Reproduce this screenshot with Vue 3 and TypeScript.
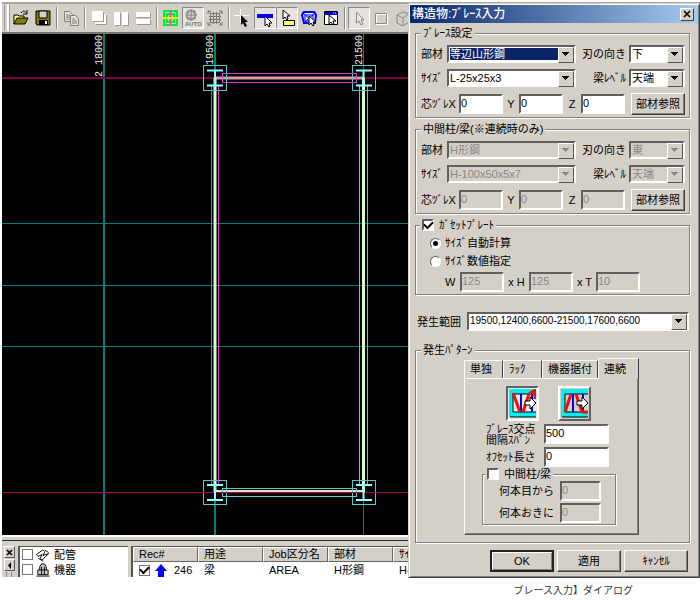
<script setup lang="ts">
import { reactive, ref } from 'vue'

interface Member {
  title: string
  disabled: boolean
  part: string
  edge: string
  size: string
  level: string
  x: string
  y: string
  z: string
}

const members = reactive<Member[]>([
  { title: 'ﾌﾞﾚｰｽ設定', disabled: false, part: '等辺山形鋼', edge: '下', size: 'L-25x25x3', level: '天端', x: '0', y: '0', z: '0' },
  { title: '中間柱/梁(※連続時のみ)', disabled: true, part: 'H形鋼', edge: '東', size: 'H-100x50x5x7', level: '天端', x: '0', y: '0', z: '0' },
])

const gusset = ref(true)
const sizeMode = ref('auto')
const plate = reactive({ w: '125', h: '125', t: '10' })
const range = ref('19500,12400,6600-21500,17600,6600')
const tabs = ['単独', 'ﾗｯｸ', '機器据付', '連続']
const tab = ref('連続')
const pattern = ref(0)
const span = ref('500')
const offset = ref('0')
const middle = ref(false)
const from = ref('0')
const every = ref('0')
const tree = reactive([
  { name: '配管', on: false },
  { name: '機器', on: false },
])
const recOn = ref(true)
</script>

<template>
  <main class="page">
    <div class="app">
      <header class="toolbar">
        <span class="grip"></span>
        <button type="button" class="tool" aria-label="開く">
          <svg width="18" height="18" viewBox="0 0 18 18"><path d="M2 15V6h4l1 1h5v3" fill="#ffff80" stroke="#000" /><path d="M2 15l3-6h11l-3 6z" fill="#808000" stroke="#000" /><path d="M9 4c2-3 4-2 5 0M15 1v4h-4" fill="none" stroke="#000" /></svg>
        </button>
        <button type="button" class="tool" aria-label="保存">
          <svg width="18" height="18" viewBox="0 0 18 18"><path d="M2 2h14v14H3l-1-1z" fill="#808000" stroke="#000" /><path d="M5 2h8v7H5z" fill="#d4d0c8" stroke="#000" /><path d="M5 11h9v5H5z" fill="#000" /><path d="M11 12h2v3h-2z" fill="#fff" /></svg>
        </button>
        <span class="sep"></span>
        <button type="button" class="tool" aria-label="コピー">
          <svg width="18" height="18" viewBox="0 0 18 18" fill="#e4e1da" stroke="#808080"><path d="M2.500 2.500h5l3 3v7h-8z" /><path d="M8.500 6.500h5l3 3v7h-8z" /><path d="M4 6h4M4 8h4M4 10h4M10 10h3M10 12h5M10 14h5" /></svg>
        </button>
        <span class="sep"></span>
        <button type="button" class="tool" aria-label="重ねて表示">
          <svg width="18" height="18" viewBox="0 0 18 18"><path d="M6 6h11v10H6z" fill="#999" /><path d="M5 5h11v10H5z" fill="#fff" /><path d="M3 3h11v10H3z" fill="#999" /><path d="M2 2h11v10H2z" fill="#fff" /></svg>
        </button>
        <button type="button" class="tool" aria-label="左右に並べる">
          <svg width="18" height="18" viewBox="0 0 18 18"><path d="M3 4h6v13H3zM11 4h6v13h-6z" fill="#999" /><path d="M2 3h6v13H2zM10 3h6v13h-6z" fill="#fff" /></svg>
        </button>
        <button type="button" class="tool" aria-label="上下に並べる">
          <svg width="18" height="18" viewBox="0 0 18 18"><path d="M3 4h14v5H3zM3 11h14v5H3z" fill="#999" /><path d="M2 3h14v5H2zM2 10h14v5H2z" fill="#fff" /></svg>
        </button>
        <span class="sep"></span>
        <button type="button" class="tool" aria-label="グリッド">
          <svg width="18" height="18" viewBox="0 0 18 18"><path d="M1 1h15v16H1z" fill="#00f030" /><path d="M3.500 3.500h10v11h-10zM6.500 6.500h4v5h-4z" fill="none" stroke="#a0ffb0" /><path d="M8.500 1v16" stroke="#ff40c0" stroke-width="2" /><path d="M1 9h15" stroke="#f0f000" stroke-width="2" /></svg>
        </button>
        <button type="button" class="tool on" aria-label="自動">
          <svg width="20" height="20" viewBox="0 0 20 20"><circle cx="8" cy="7" r="5" fill="none" stroke="#808080" /><path d="M3 7h11M8 1v12M5 2v10M11 2v10M4 4h9M4 10h9" stroke="#808080" fill="none" /><text x="2" y="18" class="auto">AUTO</text></svg>
        </button>
        <button type="button" class="tool" aria-label="範囲">
          <svg width="18" height="18" viewBox="0 0 18 18" fill="none" stroke="#777"><path d="M4.500 4.500h9v9h-9zM7.500 3v12M10.500 3v12M3 7.500h12M3 10.500h12M2 5V2h3M13 2h3v3M16 13v3h-3M5 16H2v-3M2 2l3 3M16 2l-3 3M16 16l-3-3M2 16l3-3" /></svg>
        </button>
        <span class="sep"></span>
        <button type="button" class="tool" aria-label="点選択">
          <svg width="18" height="18" viewBox="0 0 18 18"><path d="M6.500 0v14M0 6.500h15" stroke="#fff" /><path d="M7 6v10l2-2 2 4 2-1-2-4h3z" /></svg>
        </button>
        <button type="button" class="tool on" aria-label="線選択">
          <svg width="18" height="18" viewBox="0 0 18 18"><path d="M1 5h16v4H1z" fill="#00f" /><path d="M9 7v10l2-2 2 3 1-1-1-3h3z" fill="#fff" stroke="#000" /></svg>
        </button>
        <button type="button" class="tool on" aria-label="面選択">
          <svg width="18" height="18" viewBox="0 0 18 18"><path d="M5.500 11.500h11v5h-11z" fill="#ff6" stroke="#000" /><path d="M5 1v9l2-2 2 3 1-1-1-3h3z" fill="#fff" stroke="#000" /></svg>
        </button>
        <button type="button" class="tool" aria-label="立体選択">
          <svg width="18" height="18" viewBox="0 0 18 18"><path d="M4 3h10l2 3-1 8H4L2 6z" fill="#e8e8ff" stroke="#00f" stroke-width="2" /><path d="M5 6h8v6H5zM2 3l12 11M16 3L4 14" fill="none" stroke="#00f" /><path d="M9 7v9l2-2 2 3 1-1-1-3h3z" fill="#fff" stroke="#000" /></svg>
        </button>
        <button type="button" class="tool" aria-label="ウィンドウ選択">
          <svg width="18" height="18" viewBox="0 0 18 18"><path d="M2.500 2.500h13v13h-13z" fill="#fff" stroke="#000" /><path d="M3 3h12v3H3z" fill="#00c" /><path d="M11 4h1M13 4h1" stroke="#fff" /><path d="M7 6v9l2-2 2 3 1-1-1-3h3z" fill="#fff" stroke="#000" /></svg>
        </button>
        <span class="sep"></span>
        <button type="button" class="tool on" aria-label="選択">
          <svg width="18" height="18" viewBox="0 0 18 18"><path d="M6.500 3v11l2.500-2 2 4 2-1-2-4h3z" fill="#e8e6e2" stroke="#888" /></svg>
        </button>
        <button type="button" class="tool" aria-label="矩形">
          <svg width="18" height="18" viewBox="0 0 18 18" fill="none"><path d="M4.500 5.500h11v10h-11z" stroke="#fff" /><path d="M3.500 4.500h11v10h-11z" stroke="#888" /></svg>
        </button>
        <button type="button" class="tool" aria-label="箱">
          <svg width="18" height="18" viewBox="0 0 18 18" fill="none" stroke="#888"><path d="M3 6l6-3 6 2v8l-6 4-6-3zM3 6l6 3 6-4M9 9v8" /></svg>
        </button>
      </header>

      <svg class="canvas" role="img" aria-label="平面図">
        <g transform="translate(-2 -34)" fill="none">
          <g stroke="#008080">
            <path d="M104 34V535" stroke-width="2" />
            <path d="M215 34V535" stroke-width="2" />
            <path d="M363.500 34V535M2 223.500H700M2 285.500H700M2 346.500H700" />
          </g>
          <g class="coord" fill="#f0f0f0">
            <text transform="translate(102 77) rotate(-90)">2 18000</text>
            <text transform="translate(213 65) rotate(-90)">19500</text>
            <text transform="translate(362 65) rotate(-90)">21500</text>
          </g>
          <path d="M2 78H700" stroke="#800048" stroke-width="2" />
          <path d="M215 78H363" stroke="#d89aa0" stroke-width="3" />
          <path d="M215 78V492M363.500 78V492" stroke="#d8ffd0" stroke-width="3" />
          <path d="M215 491H363" stroke="#e8e0b8" stroke-width="2" />
          <g stroke="#5cc8c8">
            <rect x="203.500" y="65.500" width="23" height="25" />
            <rect x="352.500" y="65.500" width="23" height="25" />
            <rect x="203.500" y="480.500" width="23" height="24" />
            <rect x="352.500" y="480.500" width="23" height="24" />
            <rect x="222.500" y="488.500" width="134" height="8" />
            <rect x="359.500" y="85.500" width="8" height="399" />
          </g>
          <g stroke="#d040d0">
            <rect x="222.500" y="73.500" width="134" height="9" />
            <rect x="211.500" y="85.500" width="7" height="399" />
          </g>
          <path d="M2 492.500H700" stroke="#b00060" />
          <g stroke="#90ffff" stroke-width="2">
            <path d="M207 70.500H223M207 85.500H223M215 71V85" />
            <path d="M356 70.500H372M356 85.500H372M363.500 71V85" />
            <path d="M207 485H223M207 500H223M215 485V500" />
            <path d="M356 485H372M356 500H372M363.500 485V500" />
          </g>
        </g>
      </svg>

      <section class="pane">
        <div class="side">
          <button type="button" class="mini" aria-label="閉じる"><svg width="7" height="7" viewBox="0 0 7 7"><path d="M1 1l5 5M6 1L1 6" stroke="#000" stroke-width="1.500" /></svg></button>
          <button type="button" class="mini" aria-label="たたむ"><svg width="7" height="7" viewBox="0 0 7 7"><path d="M5 0v7L2 3.500z" /></svg></button>
          <span class="dots"></span>
        </div>
        <ul class="tree">
          <li v-for="(n, i) in tree" :key="n.name">
            <label>
              <input v-model="n.on" type="checkbox" class="box grey">
              <svg v-if="i === 0" width="17" height="15" viewBox="0 0 17 16" fill="#fff" stroke="#000"><path d="M2 8l7-5 2 2-2 4 6-2-7 7-2-2 2-4-4 2z" /><path d="M11 3l4 3M4 12l5 3" /></svg>
              <svg v-else width="17" height="15" viewBox="0 0 17 16" fill="#ccc" stroke="#000"><path d="M5.500 13V5l2-3h3l2 3v8z" /><path d="M7.500 5v8M10.500 5v8M3.500 8.500h11v5h-11zM2 15h14" /></svg>
              <span>{{ n.name }}</span>
            </label>
          </li>
        </ul>
        <div class="records">
          <table>
            <colgroup><col class="c"><col class="c"><col class="c"><col class="c"><col></colgroup>
            <thead>
              <tr><th>Rec#</th><th>用途</th><th>Job区分名</th><th>部材</th><th>ｻｲｽﾞ</th></tr>
            </thead>
            <tbody>
              <tr>
                <td>
                  <label class="rec">
                    <input v-model="recOn" type="checkbox" class="box grey">
                    <svg width="14" height="13" viewBox="0 0 14 13"><path d="M7 0l6 7h-3v6H4V7H1z" fill="#00f" /></svg>
                    <span>246</span>
                  </label>
                </td>
                <td>梁</td><td>AREA</td><td>H形鋼</td><td>H-200x100</td>
              </tr>
            </tbody>
          </table>
        </div>
      </section>

      <form class="dialog" role="dialog" aria-labelledby="title" @submit.prevent>
        <div class="titlebar">
          <h1 id="title">構造物:ﾌﾞﾚｰｽ入力</h1>
          <button type="button" class="close" aria-label="閉じる"><svg width="8" height="8" viewBox="0 0 8 8"><path d="M1 1l6 6M7 1L1 7" stroke="#000" stroke-width="1.500" /></svg></button>
        </div>

        <div class="body">
          <fieldset v-for="(m, i) in members" :key="m.title" class="group member">
            <legend>{{ m.title }}</legend>
            <div class="pair">
              <label :for="'part' + i">部材</label>
              <span class="combo" :class="{ off: m.disabled, lit: i === 0 }">
                <select :id="'part' + i" v-model="m.part" :disabled="m.disabled"><option>{{ m.part }}</option></select>
              </span>
              <label class="right" :for="'edge' + i">刃の向き</label>
              <span class="combo" :class="{ off: m.disabled }">
                <select :id="'edge' + i" v-model="m.edge" :disabled="m.disabled"><option>{{ m.edge }}</option></select>
              </span>
            </div>
            <div class="pair">
              <label :for="'size' + i">ｻｲｽﾞ</label>
              <span class="combo" :class="{ off: m.disabled }">
                <select :id="'size' + i" v-model="m.size" :disabled="m.disabled"><option>{{ m.size }}</option></select>
              </span>
              <label class="right" :for="'level' + i">梁ﾚﾍﾞﾙ</label>
              <span class="combo" :class="{ off: m.disabled }">
                <select :id="'level' + i" v-model="m.level" :disabled="m.disabled"><option>{{ m.level }}</option></select>
              </span>
            </div>
            <div class="offsets">
              <label :for="'x' + i">芯ﾂﾞﾚX</label>
              <input :id="'x' + i" v-model="m.x" class="field" :disabled="m.disabled">
              <label class="mid" :for="'y' + i">Y</label>
              <input :id="'y' + i" v-model="m.y" class="field" :disabled="m.disabled">
              <label class="mid" :for="'z' + i">Z</label>
              <input :id="'z' + i" v-model="m.z" class="field" :disabled="m.disabled">
              <button type="button" class="btn">部材参照</button>
            </div>
          </fieldset>

          <fieldset class="group gusset">
            <legend><label class="check"><input v-model="gusset" type="checkbox" class="box">ｶﾞｾｯﾄﾌﾟﾚｰﾄ</label></legend>
            <div class="modes">
              <label class="radio"><input v-model="sizeMode" type="radio" name="mode" value="auto">ｻｲｽﾞ自動計算</label>
              <label class="radio"><input v-model="sizeMode" type="radio" name="mode" value="manual">ｻｲｽﾞ数値指定</label>
              <div class="plate">
                <label for="pw">W</label>
                <input id="pw" v-model="plate.w" class="field" :disabled="sizeMode === 'auto'">
                <label for="ph">x H</label>
                <input id="ph" v-model="plate.h" class="field" :disabled="sizeMode === 'auto'">
                <label for="pt">x T</label>
                <input id="pt" v-model="plate.t" class="field" :disabled="sizeMode === 'auto'">
              </div>
            </div>
          </fieldset>

          <div class="range">
            <label for="range">発生範囲</label>
            <span class="combo"><select id="range" v-model="range"><option>{{ range }}</option></select></span>
          </div>

          <fieldset class="group pattern">
            <legend>発生ﾊﾟﾀｰﾝ</legend>
            <div class="sheet">
              <div class="tabs" role="tablist">
                <button v-for="t in tabs" :key="t" type="button" role="tab" :aria-selected="t === tab" :class="{ active: t === tab }" @click="tab = t">{{ t }}</button>
              </div>
              <div class="panel" role="tabpanel">
                <div class="kinds">
                  <button type="button" class="kind" :class="{ down: pattern === 0 }" aria-label="V字" @click="pattern = 0">
                    <svg width="27" height="29" viewBox="0 0 27 29"><path d="M0 0h27v5H4v18h23v5H0z" fill="#00f0f0" /><path d="M4 5h23M4 23h23M4 5v18M1 28h26" stroke="#000" fill="none" /><path d="M12 5v18M23 5v18" stroke="#00f" stroke-width="2" /><path d="M4 4l7 19M14 23l6-18M20 5l6-4v9" stroke="#f01010" stroke-width="3" fill="none" /><path d="M16 12h5V8l6 6-6 6v-4h-5z" fill="#fff" stroke="#000" /></svg>
                  </button>
                  <button type="button" class="kind" :class="{ down: pattern === 1 }" aria-label="逆V字" @click="pattern = 1">
                    <svg width="27" height="29" viewBox="0 0 27 29"><path d="M0 0h27v5H4v18h23v5H0z" fill="#00f0f0" /><path d="M4 5h23M4 23h23M4 5v18M1 28h26" stroke="#000" fill="none" /><path d="M12 5v18M22 5v18" stroke="#00f" stroke-width="2" /><path d="M4 23L10 5M15 5l6 18M21 23h6" stroke="#f01010" stroke-width="3" fill="none" /><path d="M16 12h5V8l6 6-6 6v-4h-5z" fill="#fff" stroke="#000" /></svg>
                  </button>
                </div>
                <div class="spans">
                  <label for="span">ﾌﾞﾚｰｽ交点<br>間隔ｽﾊﾟﾝ</label>
                  <input id="span" v-model="span" class="field">
                  <label for="off">ｵﾌｾｯﾄ長さ</label>
                  <input id="off" v-model="offset" class="field">
                </div>
                <fieldset class="group middle">
                  <legend><label class="check"><input v-model="middle" type="checkbox" class="box">中間柱/梁</label></legend>
                  <div class="counts">
                    <label for="from">何本目から</label>
                    <input id="from" v-model="from" class="field" :disabled="!middle">
                    <label for="every">何本おきに</label>
                    <input id="every" v-model="every" class="field" :disabled="!middle">
                  </div>
                </fieldset>
              </div>
            </div>
          </fieldset>

          <footer class="actions">
            <button type="submit" class="btn default">OK</button>
            <button type="button" class="btn">適用</button>
            <button type="button" class="btn">ｷｬﾝｾﾙ</button>
          </footer>
        </div>
      </form>
    </div>
    <p class="caption">ブレース入力】ダイアログ</p>
  </main>
</template>

<style>
body {
  background: #fff;
}
</style>

<style scoped>
.page {
  padding: 2px 0 0 2px;
  overflow: hidden;
  color: #000;
  font: 11px/14px "Liberation Sans", "Noto Sans CJK JP", sans-serif;
}
.page * {
  box-sizing: border-box;
}
button,
input,
select {
  font: inherit;
  color: inherit;
  border-radius: 0;
  margin: 0;
}
svg {
  display: block;
}
.app {
  position: relative;
}
.toolbar {
  display: flex;
  align-items: center;
  height: 32px;
  padding-left: 2px;
  background: #d4d0c8;
  border-top: 2px solid #aaa7a0;
  border-bottom: 2px solid #77746e;
  overflow: hidden;
}
.grip {
  width: 6px;
  height: 26px;
  flex: none;
  border: solid #999;
  border-width: 0 1px;
  box-shadow: inset -2px 0 #fff;
}
.tool {
  flex: none;
  width: 22px;
  height: 22px;
  padding: 0;
  border: 1px solid transparent;
  background: none;
  display: grid;
  place-items: center;
}
.tool.on {
  background: #e6e3de;
  border-color: #888 #fff #fff #888;
}
.auto {
  font: bold 6px "Liberation Sans", sans-serif;
  fill: #707070;
}
.sep {
  flex: none;
  width: 2px;
  height: 22px;
  margin: 0 2px;
  border-left: 1px solid #888;
  border-right: 1px solid #fff;
}
.canvas {
  width: 100%;
  height: 501px;
  background: #000;
}
.coord {
  font: 10px "Liberation Mono", monospace;
  white-space: pre;
}
.pane {
  display: flex;
  height: 42px;
  padding-top: 11px;
  gap: 3px;
  overflow: hidden;
  background: linear-gradient(#fff 2px, #d4d0c8 2px, #d4d0c8 5px, #333 5px, #333 6px, #d4d0c8 6px);
}
.side {
  width: 13px;
  display: flex;
  flex-direction: column;
  align-items: center;
  gap: 1px;
  padding-left: 1px;
}
.mini {
  width: 11px;
  height: 12px;
  flex: none;
  padding: 0;
  display: grid;
  place-items: center;
  background: #d4d0c8;
  border: 1px solid;
  border-color: #fff #555 #555 #fff;
}
.dots {
  width: 6px;
  height: 8px;
  border: solid #888;
  border-width: 0 1px;
}
.tree {
  width: 110px;
  margin: 0;
  padding: 0 0 0 2px;
  list-style: none;
  background: #fff;
  border: solid #555;
  border-width: 1px 0 0 2px;
}
.tree label {
  display: flex;
  align-items: center;
  height: 15px;
  gap: 1px;
}
.tree span {
  padding-left: 2px;
}
.records {
  flex: 1;
  min-width: 0;
  background: #fff;
  border: solid #555;
  border-width: 1px 0 0 2px;
}
table {
  width: 100%;
  table-layout: fixed;
  border-collapse: separate;
  border-spacing: 0;
}
.c {
  width: 65px;
}
th {
  height: 15px;
  padding: 0 0 0 5px;
  line-height: 13px;
  font-weight: 400;
  text-align: left;
  white-space: nowrap;
  background: #d4d0c8;
  border: 1px solid;
  border-color: #fff #666 #666 #fff;
}
td {
  padding: 1px 0 0 6px;
  white-space: nowrap;
}
.rec {
  display: flex;
  align-items: center;
  gap: 4px;
}
.rec span {
  padding-left: 2px;
}
.dialog {
  position: absolute;
  top: 1px;
  right: 0;
  width: 292px;
  padding: 1px;
  background: #d4d0c8;
  border: 1px solid;
  border-color: #d4d0c8 #404040 #404040 #d4d0c8;
  box-shadow: inset 1px 1px #fff, inset -1px -1px #808080;
}
.titlebar {
  display: flex;
  align-items: center;
  height: 18px;
  padding: 0 4px 0 2px;
  background: linear-gradient(90deg, #0a246a, #a6caf0);
}
h1 {
  flex: 1;
  margin: 0;
  font-size: 12px;
  line-height: 18px;
  font-weight: 500;
  color: #fff;
}
.close {
  width: 14px;
  height: 13px;
  padding: 0;
  display: grid;
  place-items: center;
  background: #d4d0c8;
  border: 1px solid;
  border-color: #fff #404040 #404040 #fff;
}
.body {
  padding: 3px 8px 4px 5px;
}
.group {
  margin: 0;
  min-width: 0;
  padding: 0 4px;
  border: 1px solid #808080;
  box-shadow: 1px 1px #fff, inset 1px 1px #fff;
}
legend {
  padding: 0 2px;
  line-height: 14px;
  background: #d4d0c8;
}
.member {
  height: 92px;
  margin-bottom: 4px;
  padding-left: 5px;
}
.pair {
  display: grid;
  grid-template-columns: 26px 1fr 53px 56px;
  align-items: center;
  height: 17px;
  margin: 5px 0 7px;
}
.right {
  text-align: right;
  padding-right: 3px;
}
.combo {
  display: grid;
  height: 18px;
  background: #fff;
  border: 2px solid;
  border-color: #606060 #fff #fff #606060;
}
.combo select {
  grid-area: 1 / 1;
  width: 100%;
  min-width: 0;
  height: 14px;
  padding: 0 14px 0 1px;
  line-height: 14px;
  appearance: none;
  border: 0;
  outline: 0;
  background: none;
}
.combo::after {
  content: "";
  grid-area: 1 / 1;
  justify-self: end;
  width: 14px;
  height: 14px;
  pointer-events: none;
  border: 1px solid;
  border-color: #fff #555 #555 #fff;
  background: linear-gradient(#000, #000) 3px 4px / 7px 1px no-repeat,
    linear-gradient(#000, #000) 4px 5px / 5px 1px no-repeat,
    linear-gradient(#000, #000) 5px 6px / 3px 1px no-repeat,
    linear-gradient(#000, #000) 6px 7px / 1px 1px no-repeat, #d4d0c8;
}
.lit select {
  color: #fff;
  background: #0a246a;
  border: 1px solid #fff;
  border-right: 0;
  line-height: 12px;
  padding-left: 0;
}
.combo.off {
  background: #d4d0c8;
}
.off select {
  color: #888;
  opacity: 1;
}
.off::after {
  background: linear-gradient(#888, #888) 3px 4px / 7px 1px no-repeat,
    linear-gradient(#888, #888) 4px 5px / 5px 1px no-repeat,
    linear-gradient(#888, #888) 5px 6px / 3px 1px no-repeat,
    linear-gradient(#888, #888) 6px 7px / 1px 1px no-repeat, #d4d0c8;
}
.field {
  width: 44px;
  height: 20px;
  padding: 0 0 3px;
  background: #fff;
  border: 2px solid;
  border-color: #606060 #fff #fff #606060;
}
.field:disabled {
  color: #888;
  background: #d4d0c8;
}
.offsets {
  display: grid;
  grid-template-columns: 38px 44px 16px 44px 18px 44px 1fr;
  align-items: center;
}
.mid {
  text-align: center;
}
.btn {
  height: 22px;
  padding: 0;
  background: #d4d0c8;
  border: 1px solid;
  border-color: #fff #404040 #404040 #fff;
  box-shadow: inset -1px -1px #808080;
}
.offsets .btn {
  margin-left: 6px;
  white-space: nowrap;
}
.box {
  flex: none;
  width: 12px;
  height: 12px;
  appearance: none;
  display: grid;
  place-items: center;
  background: #fff;
  border: 2px solid;
  border-color: #606060 #fff #fff #606060;
}
.box.grey {
  width: 11px;
  height: 11px;
  border: 1px solid #777;
}
.box:checked::before {
  content: "";
  width: 7px;
  height: 4px;
  border: solid #000;
  border-width: 0 0 2px 2px;
  transform: translateY(-1px) rotate(-45deg);
}
.check {
  display: flex;
  align-items: center;
  gap: 5px;
}
.gusset {
  height: 77px;
}
.modes {
  padding: 2px 0 0 10px;
}
.radio {
  display: flex;
  align-items: center;
  gap: 4px;
  height: 18px;
}
.radio input {
  width: 11px;
  height: 11px;
  appearance: none;
  display: grid;
  place-items: center;
  background: #fff;
  border: 1px solid;
  border-color: #606060 #fff #fff #606060;
  border-radius: 50%;
}
.radio input:checked::before {
  content: "";
  width: 5px;
  height: 5px;
  border-radius: 50%;
  background: #000;
}
.plate {
  display: grid;
  grid-template-columns: 15px 44px 25px 44px 23px 44px;
  align-items: center;
  padding-left: 15px;
  margin-top: 2px;
}
.plate label + input + label {
  text-align: center;
}
.plate label {
  white-space: nowrap;
}
.range {
  display: grid;
  grid-template-columns: 50px 1fr;
  align-items: center;
  margin: 17px 1px 12px 2px;
}
.range .combo {
  height: 19px;
}
.range select {
  font-size: 10px;
}
.pattern {
  height: 200px;
  padding-left: 5px;
}
.sheet {
  padding: 0 46px 0 43px;
}
.tabs {
  display: flex;
  align-items: flex-end;
  height: 21px;
}
.tabs button {
  height: 18px;
  padding: 0 5px;
  background: #d4d0c8;
  border: 1px solid;
  border-color: #fff #404040 transparent #fff;
  border-bottom: 0;
  text-align: left;
  white-space: nowrap;
  line-height: 15px;
}
.tabs button:nth-child(-n + 2) {
  width: 39px;
}
.tabs button:nth-child(3) {
  width: 56px;
}
.tabs .active {
  flex: 1;
  height: 21px;
  margin-bottom: -1px;
}
.panel {
  height: 157px;
  padding: 7px 29px 0 18px;
  border: 1px solid;
  border-color: #fff #555 #555 #fff;
  box-shadow: inset -1px -1px #808080;
}
.kinds {
  display: flex;
  gap: 19px;
  padding-left: 23px;
}
.kind {
  width: 33px;
  height: 35px;
  padding: 0;
  display: grid;
  place-items: center;
  background: #d4d0c8;
  border: 2px solid;
  border-color: #fff #606060 #606060 #fff;
}
.kind.down {
  background: #eeece8;
  border-color: #606060 #fff #fff #606060;
}
.spans {
  display: grid;
  grid-template-columns: 1fr 65px;
  align-items: center;
  row-gap: 3px;
  margin-top: 3px;
  padding-left: 3px;
}
.spans label {
  line-height: 11px;
  white-space: nowrap;
}
.spans label:first-child {
  height: 20px;
}
.spans .field {
  width: 100%;
}
.middle {
  height: 58px;
  margin: 0 -7px 0 -1px;
  padding: 0 2px;
}
.counts {
  display: grid;
  grid-template-columns: 61px 41px;
  align-items: center;
  row-gap: 2px;
  padding-left: 14px;
}
.middle .field {
  width: 41px;
}
.actions {
  display: flex;
  justify-content: flex-end;
  gap: 3px;
  padding: 7px 2px 0 0;
}
.actions .btn {
  width: 64px;
}
.actions .default {
  border: 2px solid;
  border-color: #222;
  box-shadow: inset 1px 1px #fff, inset -1px -1px #808080;
}
.caption {
  margin: 7px 0 0;
  padding-right: 67px;
  text-align: right;
  font-size: 10px;
  line-height: 14px;
  color: #333;
}
</style>
